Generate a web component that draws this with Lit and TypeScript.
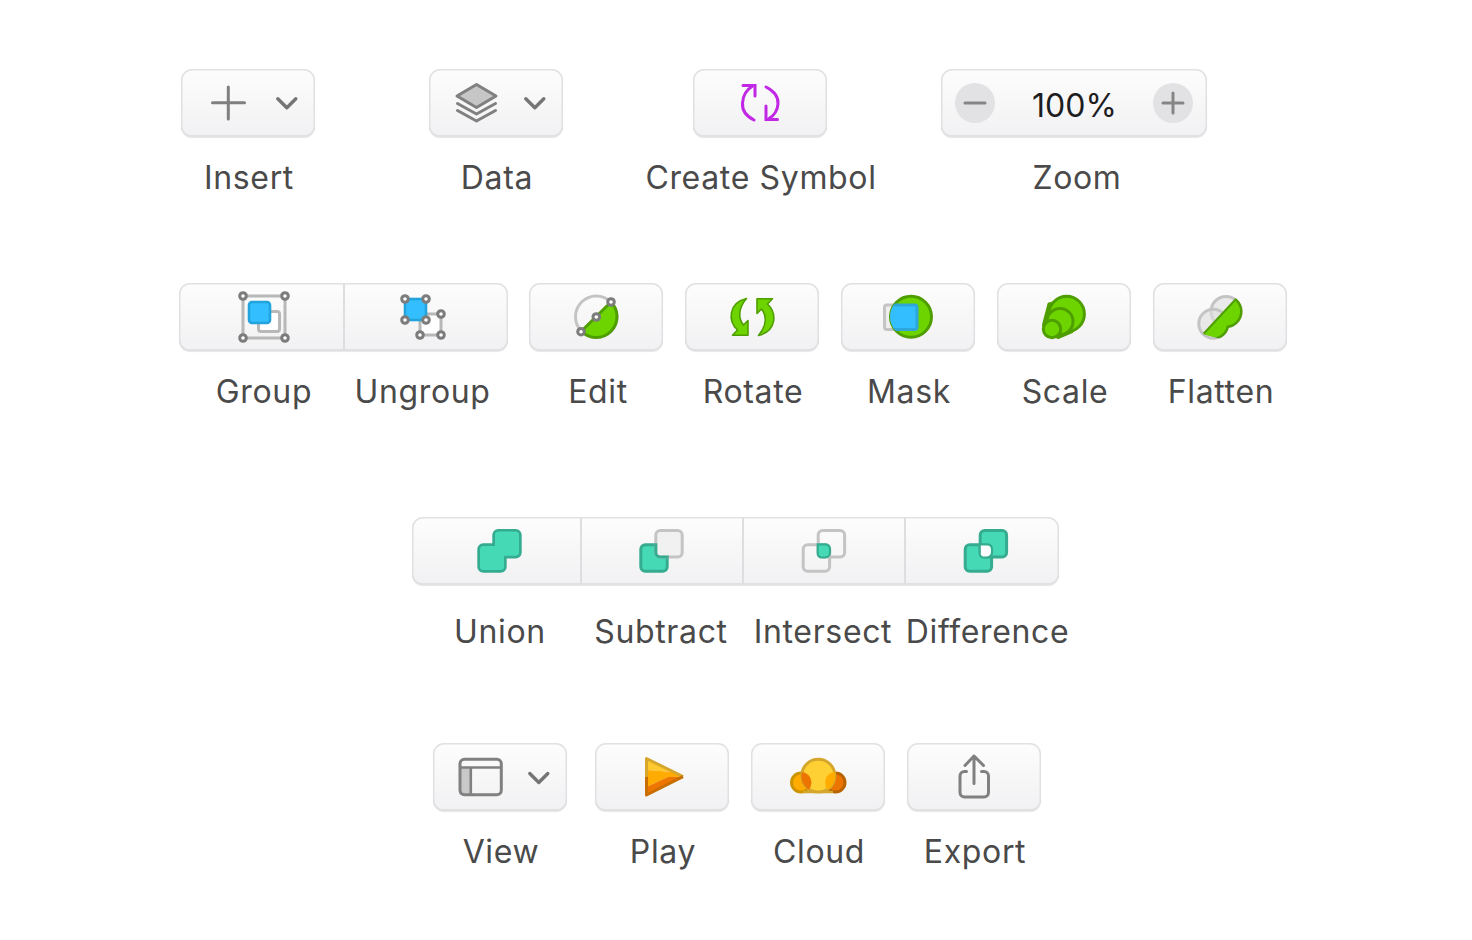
import { LitElement, html, svg, css } from "lit";
import { customElement } from "lit/decorators.js";

const GRN = "#6dd400", GRND = "#4f9e00", BLU = "#33bfff", BLUD = "#22a3dc";
const GRY = "#808080", TEAL = "#45d9b5", TEALD = "#35ab8f";

const chevron = (x: number) => svg`<path d="M${x} 98.8l9 9 9-9" fill="none" stroke="#757575" stroke-width="3.4" stroke-linecap="round" stroke-linejoin="round"/>`;
const handle = (x: number, y: number) => svg`<circle cx=${x} cy=${y} r="3.3" fill="#fff" stroke="#7c7c7c" stroke-width="3"/>`;
const sq = (x: number, y: number, extra = 29.4) => svg`<rect x=${x + 1.5} y=${y + 1.5} width=${extra - 3} height=${extra - 3} rx="4.5"/>`;

const icons: Record<string, unknown> = {
  insert: svg`<path d="M212.5 102.8h32M228.3 87v32" fill="none" stroke="#7f7f7f" stroke-width="3" stroke-linecap="round"/>${chevron(277.8)}`,
  data: svg`<path d="M476.5 84.5L496 96 476.5 107.5 457 96Z" fill="#c6c6c6" stroke="#808080" stroke-width="3" stroke-linejoin="round"/>
    <path d="M457.5 103.5L476.5 114 495.5 103.5M457.5 110.5L476.5 121 495.5 110.5" fill="none" stroke="#808080" stroke-width="3" stroke-linecap="round" stroke-linejoin="round"/>${chevron(525.8)}`,
  symbol: svg`<g fill="none" stroke="#c128e6" stroke-width="3" stroke-linecap="round" stroke-linejoin="miter">
    <path d="M754 120C746 116 742 110 742.5 103C743 96 746 90 752 86.5"/><path d="M743 85.5H755V96"/>
    <path d="M766 87C774 91 778.500 97 778 104C777.500 110 775 115 769 118.500"/><path d="M766 106V119.500H777.500"/></g>`,
  zoom: svg`<circle cx="975" cy="103" r="20" fill="#e2e2e4"/><circle cx="1173" cy="103" r="20" fill="#e2e2e4"/>
    <path d="M965 103h20M1163 103h20M1173 93v20" stroke="#858585" stroke-width="3" stroke-linecap="round" fill="none"/>`,
  group: svg`<rect x="243" y="296" width="42" height="42" fill="none" stroke="#b8b8b8" stroke-width="3"/>
    <rect x="258.500" y="311.500" width="21" height="20" rx="2.500" fill="#fff" stroke="#b8b8b8" stroke-width="3"/>
    <rect x="249" y="302" width="21" height="21" rx="3" fill=${BLU} stroke=${BLUD} stroke-width="2.600"/>
    ${handle(243, 296)}${handle(285, 296)}${handle(243, 338)}${handle(285, 338)}`,
  ungroup: svg`<rect x="420" y="314" width="21" height="21" fill="#fff" stroke="#b8b8b8" stroke-width="3"/>
    <rect x="405" y="299" width="21" height="21" fill=${BLU} stroke=${BLUD} stroke-width="2.600"/>
    ${handle(405, 299)}${handle(426, 299)}${handle(405, 320)}${handle(426, 320)}${handle(441, 314)}${handle(420, 335)}${handle(441, 335)}`,
  edit: svg`<circle cx="596.300" cy="316.700" r="20.800" fill="none" stroke="#c4c4c4" stroke-width="3"/>
    <path d="M581.300 331.300L611 302A20.800 20.800 0 0 1 581.300 331.300Z" fill=${GRN} stroke=${GRND} stroke-width="3" stroke-linejoin="round"/>
    ${handle(581, 331.700)}${handle(596.300, 317)}${handle(611, 302)}`,
  rotate: svg`<g fill=${GRN} stroke=${GRND} stroke-width="1.600" stroke-linejoin="round">
    <path d="M757 298.800H772.500L767.500 304C777 313 777 331 758.500 335.500C767.500 325 766.500 315 761.500 309L757 313.500Z"/>
    <path d="M757 298.800H772.500L767.500 304C777 313 777 331 758.500 335.500C767.500 325 766.500 315 761.500 309L757 313.500Z" transform="rotate(180 752.500 317)"/></g>`,
  mask: svg`<defs><clipPath id="mc"><circle cx="911" cy="316.700" r="21"/></clipPath></defs>
    <rect x="884.500" y="305" width="32" height="24.500" rx="2.500" fill="#eee" stroke="#c4c4c4" stroke-width="3"/>
    <circle cx="911" cy="316.700" r="20.500" fill=${GRN} stroke=${GRND} stroke-width="3"/>
    <rect x="885" y="305" width="32" height="24.500" rx="2.500" fill=${BLU} stroke="#2ea6da" stroke-width="3" clip-path="url(#mc)"/>`,
  scale: svg`<path d="M1049 304L1043.500 325L1058 337.500L1072 331.500L1066 300Z" fill=${GRN} stroke=${GRND} stroke-width="3" stroke-linejoin="round"/>
    <circle cx="1066.700" cy="314" r="17.700" fill=${GRN} stroke=${GRND} stroke-width="3"/>
    <circle cx="1060" cy="321.500" r="13" fill=${GRN} stroke=${GRND} stroke-width="3"/>
    <circle cx="1052" cy="329" r="8.700" fill=${GRN} stroke=${GRND} stroke-width="3"/>`,
  flatten: svg`<defs><clipPath id="fc"><path d="M1236.700 298.300L1203.300 334L1260 350V290Z"/></clipPath></defs>
    <g fill="#e0e0e0" fill-opacity=".6" stroke="#c4c4c4" stroke-width="3"><circle cx="1226" cy="311.500" r="15"/><circle cx="1213.300" cy="323.700" r="14.500"/></g>
    <g clip-path="url(#fc)"><g fill=${GRN} stroke=${GRND} stroke-width="3"><circle cx="1226" cy="311.500" r="15"/><circle cx="1213.300" cy="323.700" r="14.500"/></g>
    <circle cx="1226" cy="311.500" r="14" fill=${GRN}/><circle cx="1213.300" cy="323.700" r="13.500" fill=${GRN}/></g>
    <path d="M1236.200 298.800L1203.800 333.500" stroke=${GRND} stroke-width="2"/>`,
  union: svg`<g fill=${TEAL} stroke=${TEALD} stroke-width="3">${sq(477.3, 543.3)}${sq(492.3, 529)}</g>
    <g fill=${TEAL}><rect x="480" y="546" width="24" height="24" rx="3.500"/><rect x="495" y="531.500" width="24" height="24" rx="3.500"/></g>`,
  subtract: svg`<defs><clipPath id="sa"><rect x="639.300" y="543.300" width="29.400" height="29.400" rx="6"/></clipPath></defs>
    <g fill=${TEAL} stroke=${TEALD} stroke-width="3">${sq(639.3, 543.3)}</g>
    <g fill="#f1f1f1" stroke="#c4c4c4" stroke-width="3">${sq(654.3, 529)}</g>
    <g fill="none" stroke=${TEALD} stroke-width="3" clip-path="url(#sa)">${sq(654.3, 529)}</g>`,
  intersect: svg`<g fill="none" stroke="#c4c4c4" stroke-width="3">${sq(801.7, 543.3)}${sq(816.7, 529)}</g>
    <path d="M817.700 544.300H825.500A5 5 0 0 1 830 549V552.500A5 5 0 0 1 825 557.500H821.500A4 4 0 0 1 817.700 553.500Z" fill=${TEAL} stroke=${TEALD} stroke-width="2.200"/>`,
  difference: svg`<g fill=${TEAL} stroke=${TEALD} stroke-width="3">${sq(963.7, 543.3)}${sq(978.7, 529)}</g>
    <path d="M979.700 544.300H987.500A5 5 0 0 1 992 549V552.500A5 5 0 0 1 987 557.500H983.500A4 4 0 0 1 979.700 553.500Z" fill="#fff" stroke=${TEALD} stroke-width="2.200"/>`,
  view: svg`<path d="M460 767.500H470.500V794.500H465A5 5 0 0 1 460 789.500Z" fill="#c8c8c8"/>
    <rect x="460" y="759.200" width="41.300" height="35.500" rx="4.500" fill="none" stroke=${GRY} stroke-width="3"/>
    <path d="M460 767.500H501M470.800 767.500V794.500" fill="none" stroke=${GRY} stroke-width="2.600"/>
    <path d="M529.800 773.500l9 9 9-9" fill="none" stroke="#757575" stroke-width="3.400" stroke-linecap="round" stroke-linejoin="round"/>`,
  play: svg`<path d="M646.500 758.500L673 772L646.500 770Z" fill="#fec92e"/>
    <path d="M646.500 770L673 772L683 776.700L668 777L646.500 787Z" fill="#ffab00"/>
    <path d="M646.500 787L668 777L683 776.700L646.500 795Z" fill="#ee7500"/>
    <path d="M646.500 776.700V758.500L683 776.700" fill="none" stroke="#d6a72c" stroke-width="3" stroke-linejoin="round"/>
    <path d="M683 776.700L646.500 795V776.700" fill="none" stroke="#c96e00" stroke-width="3" stroke-linejoin="round"/>`,
  cloud: svg`<defs><clipPath id="cc"><rect x="780" y="750" width="80" height="43.500"/></clipPath>
      <clipPath id="cm"><circle cx="818.300" cy="775.700" r="17"/></clipPath></defs>
    <circle cx="801" cy="782.500" r="9.500" fill="#ffab00" stroke="#cc9400" stroke-width="3"/>
    <circle cx="835.500" cy="782.500" r="9.500" fill="#ec7400" stroke="#b96300" stroke-width="3"/>
    <g clip-path="url(#cc)"><circle cx="818.300" cy="775.700" r="16.500" fill="#ffd033" stroke="#d4a72c" stroke-width="3"/></g>
    <g clip-path="url(#cm)"><circle cx="801" cy="782.500" r="10.500" fill="#ec7400"/><circle cx="835.500" cy="782.500" r="10.500" fill="#ffab00"/></g>
    <path d="M803 792H833" stroke="#d4a72c" stroke-width="2.500"/>`,
  export: svg`<path d="M966.500 771.500H964.500A4.500 4.500 0 0 0 960 776V792.500A4.500 4.500 0 0 0 964.500 797H984A4.500 4.500 0 0 0 988.500 792.500V776A4.500 4.500 0 0 0 984 771.500H981.500" fill="none" stroke=${GRY} stroke-width="3" stroke-linecap="round"/>
    <path d="M974 783.500V756M965 765.500L974 756L983.500 765.500" fill="none" stroke=${GRY} stroke-width="3" stroke-linecap="round" stroke-linejoin="round"/>`,
};

interface Cell { label: string; icon: string; x: number; y: number; w: number; dx: number; }
const c = (label: string, icon: string, x: number, y: number, w = 134, dx = 1): Cell => ({ label, icon, x, y, w, dx });

const rows = [
  { cls: "r1", solo: [c("Insert", "insert", 181, 69), c("Data", "data", 429, 69), c("Create Symbol", "symbol", 693, 69), c("Zoom", "zoom", 941, 69, 266, 3)] },
  { cls: "r2", seg: [c("Group", "group", 179, 283, 164, 3), c("Ungroup", "ungroup", 345, 283, 163, -3)],
    solo: [c("Edit", "edit", 529, 283, 134, 2), c("Rotate", "rotate", 685, 283), c("Mask", "mask", 841, 283), c("Scale", "scale", 997, 283), c("Flatten", "flatten", 1153, 283)] },
  { cls: "r3", seg: [c("Union", "union", 412, 517, 168, 4), c("Subtract", "subtract", 582, 517, 160, 0), c("Intersect", "intersect", 744, 517, 160, 0), c("Difference", "difference", 906, 517, 153, 6)] },
  { cls: "r4", solo: [c("View", "view", 433, 743), c("Play", "play", 595, 743), c("Cloud", "cloud", 751, 743), c("Export", "export", 907, 743)] },
];

@customElement("app-root")
export class AppRoot extends LitElement {
  static styles = css`
    :host { display: block; font-family: Inter, "Noto Sans", sans-serif; color: #4a4a4a; }
    .page { display: flex; flex-direction: column; padding-top: 69px; height: 871px; }
    .row { display: flex; }
    .r1 { padding-left: 181px; height: 214px; }
    .r2 { padding-left: 179px; height: 234px; }
    .r3 { padding-left: 412px; height: 226px; }
    .r4 { padding-left: 433px; }
    .r1 > .item:nth-child(2) { margin-left: 114px; }
    .r1 > .item:nth-child(3) { margin-left: 130px; }
    .r1 > .item:nth-child(4) { margin-left: 114px; }
    .r2 .seg-group { margin-right: 21px; }
    .r2 > .item + .item { margin-left: 22px; }
    .r4 > .item:nth-child(2) { margin-left: 28px; }
    .r4 > .item:nth-child(n + 3) { margin-left: 22px; }
    .seg-group { display: flex; position: relative; align-self: flex-start; }
    .seg-group::before, .btn.solo {
      background: linear-gradient(#fdfdfd, #f1f1f3);
      border-radius: 11px;
      box-shadow: inset 0 0 0 1.5px #e1e1e3, inset 0 -1.5px 0 #d2d2d4, 0 1px 1px rgba(0, 0, 0, .1);
    }
    .seg-group::before { content: ""; position: absolute; left: 0; right: 0; top: 0; height: 68px; }
    .item { display: flex; flex-direction: column; align-items: center; position: relative; flex: none; }
    .btn { position: relative; height: 68px; align-self: stretch; }
    .btn svg { display: block; }
    .divided { padding-left: 2px; }
    .divided::before {
      content: ""; position: absolute; left: 0; top: 1px; bottom: 1px; width: 2px; background: #dedee0;
    }
    .label { font-size: 32px; line-height: 40px; margin-top: 21px; white-space: nowrap; letter-spacing: 0.65px; }
    .r3 .label { margin-top: 27px; }
    .pct { position: absolute; left: 1px; right: 0; top: 17px; text-align: center; font-size: 32px; line-height: 40px; color: #1d1d1f; }
  `;

  cell(b: Cell, seg?: { first: boolean }) {
    const divided = seg && !seg.first;
    const cls = seg ? `btn ${divided ? "divided" : ""}` : "btn solo";
    return html`<div class="item" style="width:${b.w + (divided ? 2 : 0)}px">
      <div class=${cls}>
        <svg width=${b.w} height="68" viewBox="${b.x} ${b.y} ${b.w} 68">${icons[b.icon]}</svg>
        ${b.icon === "zoom" ? html`<div class="pct">100%</div>` : ""}
      </div>
      <div class="label" style="transform:translateX(${b.dx}px)">${b.label}</div>
    </div>`;
  }

  render() {
    return html`<div class="page">
      ${rows.map((r) => html`<div class="row ${r.cls}">
        ${r.seg ? html`<div class="seg-group">${r.seg.map((b, i) => this.cell(b, { first: i === 0 }))}</div>` : ""}
        ${r.solo ? r.solo.map((b) => this.cell(b)) : ""}
      </div>`)}
    </div>`;
  }
}
